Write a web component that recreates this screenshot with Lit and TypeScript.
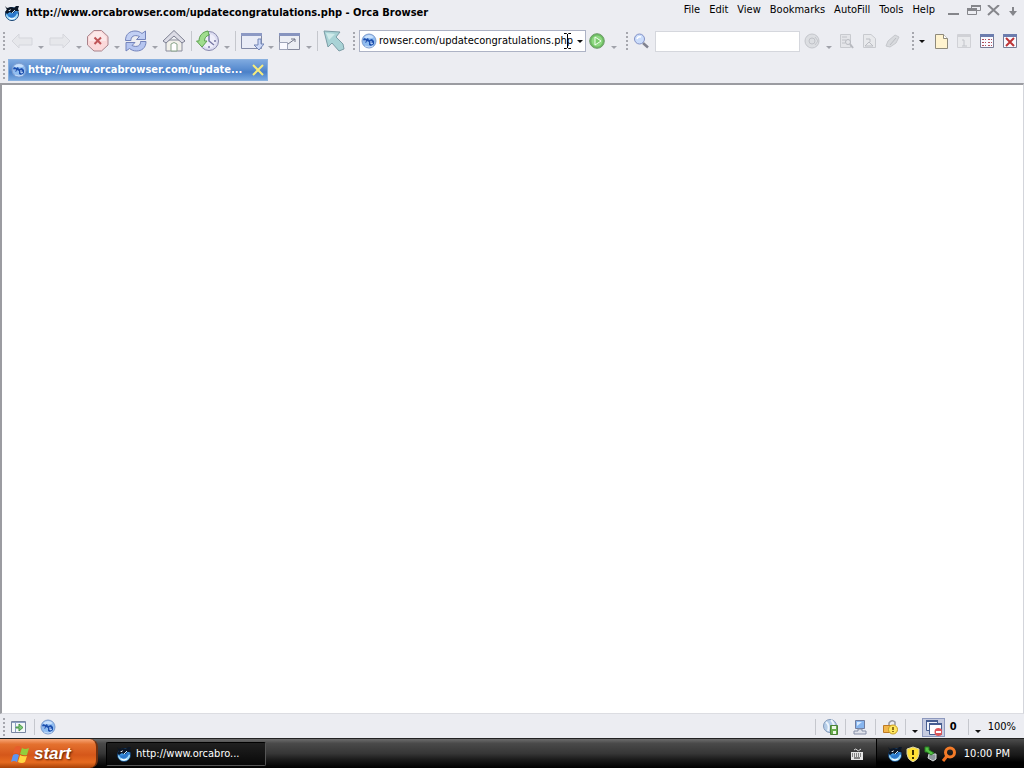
import { LitElement, html, css, svg, nothing } from "lit";
import { customElement, property } from "lit/decorators.js";
import { classMap } from "lit/directives/class-map.js";

const icon = (size: number, content: unknown, faded = false) => html`
  <svg width=${size} height=${size} viewBox="0 0 ${size} ${size}" fill="none" aria-hidden="true" opacity=${faded ? "0.55" : "1"}>${content}</svg>
`;

const orca = svg`
  <circle cx="8" cy="9" r="6.500" fill="#3f95dd" stroke="#16406e"/>
  <path d="M2 9C2 13 5 15 8 15C12 15 14 12 14 9L11 8L8 12L5 12Z" fill="#a5dcf8"/>
  <path d="M3 8C6 11 9 9 11 6L13 8C12 12 8 14 5 12Z" fill="#2b78cc"/>
  <path d="M1 1L3 3L7 2L10 3L12 1H15L14 4L15 6L11 6C10 8 8 9 6 7L3 9L1 7L3 5Z" fill="#0b1626"/>
  <path d="M4 6L7 4L6 6Z" fill="#fff"/>
  <path d="M8 8L11 5" stroke="#cfeafb"/>
  <path d="M5 13L8 14L11 13" stroke="#fff"/>`;
const globe = svg`
  <circle cx="8" cy="8" r="7" fill="#8fbcf0" stroke="#7f9ccc"/>
  <path d="M3 4Q8 0 13 4Q10 6 8 5Q5 7 3 4Z" fill="#d6e9ff" opacity=".8"/>
  <path d="M2 6L4 5L5 6L7 5L8 7L11 6L13 8L13 11L10 13L8 12V9L6 8L5 10L3 8Z" fill="#1c4fae"/>
  <path d="M10 8V11L12 10M4 7V9" stroke="#cfe4ff"/>
  <path d="M4 13Q8 15 12 13" stroke="#c5dcfa"/>`;
const back = svg`<path d="M2 12L9 5V9H22V16H9V19Z" fill="#e2e3e7" stroke="#c3c5cb"/>`;
const forward = svg`<path d="M22 12L15 5V9H2V16H15V19Z" fill="#e2e3e7" stroke="#c3c5cb"/>`;
const stop = svg`
  <path d="M8 1.500H15.500L22 7.500V16L15.500 22H8L1.500 16V7.500Z" fill="#fbd9da" stroke="#a9838b" stroke-linejoin="round"/>
  <path d="M8 3H15L20 8V12H3V8Z" fill="#fff" opacity=".4"/>
  <path d="M8.500 8.500L15 15M15 8.500L8.500 15" stroke="#bf5557" stroke-width="2"/>`;
const refresh = svg`
  <path d="M1.500 11.500C1.500 5 6 2 11 2C14 2 16 3 18 4.500L21.500 2V10.500H12.500L15.500 7.500C10 5 6.500 8 7 11.500Z" fill="#c1cff4" stroke="#7484bb"/>
  <path d="M22 12.500C22 19 17.500 22 12.500 22C9.500 22 7.500 21 5.500 19.500L2 22V13.500H11L8 16.500C13.500 19 17 16 16.500 12.500Z" fill="#b5c5f0" stroke="#7484bb"/>`;
const home = svg`
  <path d="M4 11H20V22H4Z" fill="#f1f0ea" stroke="#8a8d9c"/>
  <path d="M1 12L12 1.500L23 12L20 14L12 7L4 14Z" fill="#dcdce6" stroke="#7d8092"/>
  <path d="M9 22V15Q12 12 15 15V22Z" fill="#fff" stroke="#8aa58a"/>`;
const history = svg`
  <circle cx="13" cy="12" r="9.500" fill="#dcdcf1" stroke="#8889ad"/>
  <circle cx="13" cy="12" r="7" fill="#eeeefa"/>
  <path d="M13 5V12L18 16M13 17V19M20 12H18" stroke="#7979a5" stroke-width="1.500"/>
  <path d="M12 2C6 3 3 7 3 12H0.500L6 18L11 12H8.500C8.500 9 10 7 13 6Z" fill="#a0dd8e" stroke="#5da34f"/>`;
const openWindow = svg`
  <path d="M1.500 4.500H21.500V19.500H1.500Z" fill="#e9ecf6" stroke="#8189a6"/>
  <path d="M1 4H22V7H1Z" fill="#8c99c4"/>
  <path d="M18 10H21V15H24L19 21L14 16H18Z" fill="#cdd9f7" stroke="#7385b5"/>`;
const popup = svg`
  <path d="M1.500 4.500H21.500V20.500H1.500Z" fill="#eceef4" stroke="#868b9e"/>
  <path d="M1 4H22V7H1Z" fill="#8794bf"/>
  <path d="M1.500 13.500H9.500V20.500H1.500Z" fill="#fafaff" stroke="#9ea4b8"/>
  <path d="M10 15L17 10M13 10H17V13" stroke="#727788"/>`;
const pointer = svg`<path d="M2 2L18 3L14 8L21 15L22 20L17 22L10 14L6 18Z" fill="#a9d3d6" stroke="#7c9da6"/><path d="M4 4L13 5L7 11Z" fill="#cfeaea"/>`;
const go = svg`
  <circle cx="8" cy="8" r="7.300" fill="#6dbd62" stroke="#6d9b69"/>
  <circle cx="8" cy="8" r="5.500" fill="#8ed882"/>
  <path d="M6 4L12 8L6 12Z" fill="#7acb6d" stroke="#f4fff2"/>`;
const magnifier = svg`
  <path d="M10 10L15 14.500" stroke="#80828f" stroke-width="2.500"/>
  <circle cx="6.500" cy="6" r="5" fill="#cadcfb" stroke="#8392c6"/>
  <path d="M4 6Q5 3 8 4" stroke="#fff" stroke-width="1.500"/>`;
const paleTarget = svg`<circle cx="8" cy="8" r="7" fill="#dcdee2" stroke="#c4c6cc"/><circle cx="8" cy="8" r="3" stroke="#c0c2c8"/><path d="M11 4L14 8L11 12" stroke="#c4c6cc"/>`;
const paleFind = svg`<path d="M2.500 1.500H12.500V14.500H2.500Z" fill="#e4e5e9" stroke="#c8cacf"/><path d="M4 4H9M4 7H8M4 10H7" stroke="#c0c2c8"/><circle cx="10" cy="9" r="2.500" stroke="#b8bac0"/><path d="M12 11L15 15" stroke="#b8bac0" stroke-width="2"/>`;
const palePage = svg`<path d="M2.500 1.500H10L14.500 5.500V14.500H2.500Z" fill="#e8e9ec" stroke="#c8cacf"/><path d="M5 6H9V9M4 13L8 9L12 13Z" stroke="#bcbec4"/>`;
const palePen = svg`<path d="M2 13L4 8L11 2L15 4L12 10L6 14Z" fill="#d8dade" stroke="#c6c8cd"/><path d="M6 12L12 5" stroke="#bbbdc3"/>`;
const newPage = svg`<path d="M2.500 1.500H10.500L14.500 5.500V15.500H2.500Z" fill="#fff3cf" stroke="#8f8a7b"/><path d="M10.500 1.500V5.500H14.500" fill="#fff" stroke="#8f8a7b"/>`;
const paleTab = svg`<path d="M1.500 1.500H14.500V14.500H1.500Z" fill="#e9eaed" stroke="#d0d1d6"/><path d="M2 3H14" stroke="#d0d1d6" stroke-width="2"/><path d="M6 7H8V13M6 13H11" stroke="#c2c4ca"/>`;
const grid = svg`<path d="M1.500 1.500H14.500V14.500H1.500Z" fill="#fafaff" stroke="#777d96"/><path d="M1 2.500H15" stroke="#6c7dae" stroke-width="3"/><path d="M3 6.500H7M9 6.500H13M3 9.500H7M9 9.500H13M3 12.500H7M9 12.500H13" stroke="#b0505c" stroke-dasharray="2 1"/>`;
const closeTab = svg`<path d="M1.500 1.500H14.500V14.500H1.500Z" fill="#fafaff" stroke="#777d96"/><path d="M1 2.500H15" stroke="#6c7dae" stroke-width="3"/><path d="M4 5L12 13M12 5L4 13" stroke="#bd3436" stroke-width="2"/>`;
const panel = svg`<path d="M.5 2.500H14.500V13.500H.5Z" fill="#f4f7f8" stroke="#7986a0"/><path d="M1 3.500H14M4.500 3V13" stroke="#8da0c4"/><path d="M5 8H8V5L12 8.500L8 12V9H5Z" fill="#7fca79" stroke="#4b9648"/>`;
const globeDisk = svg`<circle cx="8" cy="7" r="6.500" fill="#b5cde8" stroke="#8299b8"/><path d="M4 3Q8 6 6 12M9 1Q13 5 11 8" stroke="#eef5fc" stroke-width="2"/><path d="M8.500 6.500H15.500V15.500H8.500Z" fill="#67ad4c" stroke="#4c8238"/><path d="M10 7H14V10H10ZM11 12H14V15H11Z" fill="#eef7e9"/>`;
const computer = svg`<path d="M3.500 1.500H12.500V9.500H3.500Z" fill="#87b5ee" stroke="#6f7da0"/><path d="M5 3H10L5 7Z" fill="#d6e9ff"/><path d="M6 10H10V12H14V15H2V12H6Z" fill="#dfe2ea" stroke="#838da6"/>`;
const lock = svg`<path d="M1.500 6.500H10.500V13.500H1.500Z" fill="#f2b64c" stroke="#bd7b24"/><path d="M7 6V4Q10 0 13 3V6" stroke="#96979e" stroke-width="1.500"/><circle cx="11" cy="10.500" r="4.500" fill="#ffe75e" stroke="#c69b22"/><path d="M11 8V11M11 12V13" stroke="#6b4a00" stroke-width="1.500"/>`;
const blocked = svg`<path d="M1.500 1.500H12.500V11.500H1.500Z" fill="#eef2fb" stroke="#475e91"/><path d="M1 2H13" stroke="#475e91" stroke-width="2"/><path d="M4.500 4.500H16.500V15.500H4.500Z" fill="#fff" stroke="#475e91"/><path d="M4 5H17" stroke="#475e91" stroke-width="2"/><circle cx="13.500" cy="13" r="4" fill="#db5559"/><path d="M11 13H16" stroke="#fff" stroke-width="2"/>`;
const windowsFlag = svg`<path d="M4 2Q7 0 10 2L8 9Q5 7 2 9Z" fill="#e65d2b"/><path d="M11 3Q14 5 18 3L16 10Q13 11 9 9Z" fill="#93ce3c"/><path d="M2 10Q5 8 8 10L6 17Q3 15 0 17Z" fill="#5e95f0"/><path d="M9 10Q12 12 16 11L14 17Q11 19 7 17Z" fill="#ffd640"/>`;
const keyboard = svg`<path d="M1 5H13V13H1Z" fill="#e6e6e6"/><path d="M2 7H12M2 9H12" stroke="#222" stroke-dasharray="1 1"/><path d="M4 11H10" stroke="#222"/><path d="M4 3Q6 1 7 3T11 2" stroke="#ddd"/>`;
const shield = svg`<path d="M8 1L14 3V8Q14 13 8 16Q2 13 2 8V3Z" fill="#ffe034" stroke="#d8d3a8"/><path d="M8 4V9M8 11V13" stroke="#3c3000" stroke-width="2"/>`;
const eject = svg`<path d="M6 8L13 8V13L10 15L5 12Z" fill="#8f979c" stroke="#d7dcde"/><path d="M2 1L6 1V4L11 7L8 9L4 6L2 6Z" fill="#54c244" stroke="#267e20"/>`;
const orangeFind = svg`<path d="M6 10L2 15" stroke="#f27222" stroke-width="3"/><circle cx="9" cy="6.500" r="4.500" stroke="#f47b28" stroke-width="3"/>`;

@customElement("tool-button")
class ToolButton extends LitElement {
  @property() label = "";
  @property({ type: Boolean }) split = false;
  @property({ type: Boolean }) small = false;
  @property({ type: Boolean }) pressed = false;
  @property({ type: Boolean }) disabled = false;
  @property({ attribute: false }) glyph: unknown = nothing;

  static styles = css`
    :host { display: flex; align-items: center; flex: none; }
    button { box-sizing: border-box; display: grid; place-items: center; padding: 0; border: 0; background: none; width: 24px; height: 24px; }
    svg { display: block; }
    .small { width: 16px; height: 20px; }
    .pressed { width: 23px; height: 19px; background: #c5cbe0; border: 1px solid #8d98bd; }
    .arrow { width: 14px; align-items: end; padding-bottom: 4px; }
    .small + .arrow { padding-left: 4px; height: 24px; }
    .arrow::after { content: ""; border: 3px solid transparent; border-top-color: #a0a2aa; border-bottom: 0; }
  `;

  render() {
    const size = this.pressed ? 17 : this.small ? 16 : 24;
    return html`
      <button class=${classMap({ small: this.small, pressed: this.pressed })} aria-label=${this.label} ?disabled=${this.disabled}>
        ${icon(size, this.glyph, this.disabled)}
      </button>
      ${this.split ? html`<button class="arrow" aria-label="${this.label} options"></button>` : nothing}
    `;
  }
}

@customElement("app-root")
class AppRoot extends LitElement {
  static styles = css`
    :host {
      display: flex; flex-direction: column; height: 100vh; overflow: hidden;
      background: #ecedf2; color: #000;
      font: 11px/14px "DejaVu Sans Condensed", "DejaVu Sans", sans-serif;
    }
    * { box-sizing: border-box; }
    svg { display: block; flex: none; }
    button { padding: 0; border: 0; background: none; font: inherit; color: inherit; }
    input { min-width: 0; padding: 0; border: 0; outline: 0; background: none; font: inherit; color: inherit; }
    .title { display: flex; align-items: center; flex: none; height: 25px; padding: 0 6px 0 4px; }
    h1 { margin: 0 0 0 6px; font-size: 11px; line-height: 14px; font-weight: bold; flex: 1; white-space: nowrap; }
    .menu { display: flex; gap: 9px; height: 25px; padding-top: 3px; align-items: start; }
    .controls { display: flex; gap: 4px; margin-left: 11px; }
    .tools { display: flex; align-items: center; flex: none; height: 32px; padding: 0 6px 0 3px; }
    .grip { flex: none; width: 2px; height: 18px; background: repeating-linear-gradient(#a6a7ae 0 2px, transparent 2px 4px); }
    .spaced { margin-left: 7px; }
    .group { display: flex; align-items: center; }
    .main { padding-left: 5px; }
    .rule { flex: none; width: 6px; height: 20px; border-left: 1px solid #c5c7cd; margin-left: 1px; margin-right: -1px; }
    .home { margin-right: 4px; }
    .address { display: flex; align-items: center; flex: 1; height: 22px; margin: 0 3px 0 4px; padding-left: 1px; background: #fff; border: 1px solid #adb3c5; position: relative; }
    .address input { flex: 1; margin-left: 2px; }
    .drop { flex: none; width: 11px; height: 18px; display: grid; place-items: center; }
    .drop::after { content: ""; border: 3px solid transparent; border-top-color: #111; border-bottom: 0; }
    .caret { position: absolute; right: 14px; top: 2px; }
    .search { margin-left: 5px; }
    .find { width: 145px; height: 21px; background: #fff; border: 1px solid #d5d7dd; margin: 0 4px 0 6px; padding: 0 3px; }
    .pale { gap: 7px; margin: 0 12px 0 4px; }
    .pages { gap: 7px; margin-left: 3px; }
    .pages .drop { width: 9px; }
    .tabs { display: flex; align-items: center; flex: none; height: 26px; padding: 0 3px; gap: 3px; }
    .tab { display: flex; align-items: center; width: 260px; height: 22px; padding: 0 3px 0 2px; color: #fff; font-weight: bold; background: linear-gradient(#7ea9df, #5a8dd0 45%, #4a80c8 60%, #78a8e0); border: 1px solid #8ab1df; }
    .tab span { flex: 1; margin-left: 1px; overflow: hidden; white-space: nowrap; }
    main { flex: 1; min-height: 0; background: #fff; border: solid #9b9ca1; border-width: 2px 1px 1px 2px; border-right-color: #d3d5db; border-bottom-color: #dcdde2; }
    .status { display: flex; align-items: center; flex: none; height: 24px; padding: 2px 8px 0 3px; }
    .status .rule { height: 16px; }
    .left { flex: 1; padding-left: 6px; }
    .left .rule { margin: 0 0 0 7px; }
    .right { gap: 7px; }
    .right .rule { width: 1px; margin: 0 -1px 0 0; }
    .right .drop { width: 6px; align-items: end; padding-bottom: 3px; }
    .count { display: flex; align-items: center; gap: 4px; }
    .count b { width: 12px; padding-left: 1px; }
    .taskbar { display: flex; align-items: center; flex: none; height: 30px; color: #fff; border-top: 1px solid #222; background: linear-gradient(#6d6d6d, #4a4a4a 15%, #363636 50%, #1c1c1c 70%, #000); }
    .start { display: flex; align-items: center; gap: 5px; width: 98px; height: 29px; padding-left: 11px; border-radius: 0 8px 8px 0; background: linear-gradient(#f8a777, #e4712f 18%, #d5571a 55%, #e66b20 80%, #a74108); border-right: 2px solid #70300f; font: italic bold 17px/20px "Liberation Sans", sans-serif; text-shadow: 1px 1px 2px #5b2000; }
    .task { display: flex; align-items: center; gap: 4px; width: 160px; height: 24px; margin-left: 8px; padding-left: 9px; background: linear-gradient(#202020, #080808); border: 1px solid #000; border-right-color: #555; border-bottom-color: #555; border-radius: 2px; white-space: nowrap; }
    .space { flex: 1; }
    .keys { margin-right: 12px; }
    .tray { display: flex; align-items: center; gap: 2px; height: 29px; padding: 0 14px 0 10px; border-left: 1px solid #000; background: linear-gradient(#4d4d4d, #292929 30%, #191919 55%, #000 80%); }
    .tray time { margin-left: 5px; white-space: nowrap; }
  `;

  render() {
    const tool = (label: string, glyph: unknown, split = false, disabled = false) => html`
      <tool-button .label=${label} .glyph=${glyph} .split=${split} .disabled=${disabled}></tool-button>`;
    const small = (label: string, glyph: unknown, split = false) => html`
      <tool-button .label=${label} .glyph=${glyph} .split=${split} small></tool-button>`;
    const rule = html`<span class="rule"></span>`;
    const grip = html`<span class="grip"></span>`;
    return html`
      <header class="title">
        ${icon(16, orca)}
        <h1>http://www.orcabrowser.com/updatecongratulations.php - Orca Browser</h1>
        <nav class="menu">
          ${["File", "Edit", "View", "Bookmarks", "AutoFill", "Tools", "Help"].map((m) => html`<button>${m}</button>`)}
        </nav>
        <div class="controls">
          <button aria-label="Minimize">${icon(16, svg`<path d="M2 9H13" stroke="#85868b" stroke-width="2"/>`)}</button>
          <button aria-label="Restore">${icon(16, svg`<path d="M5.500 4V-.5H14.500V5.500H11M1.500 3.500H10.500V9.500H1.500Z" stroke="#85868b"/><path d="M5 .5H15M1 4.500H11" stroke="#85868b" stroke-width="3"/>`)}</button>
          <button aria-label="Close">${icon(16, svg`<path d="M2 0L13 10M13 0L2 10" stroke="#85868b" stroke-width="2"/>`)}</button>
          <button aria-label="Collapse">${icon(12, svg`<path d="M7 0V6" stroke="#85868b" stroke-width="2"/><path d="M3 4H11L7 9Z" fill="#85868b"/>`)}</button>
        </div>
      </header>

      <div class="tools">
        ${grip}
        <div class="group main">
          ${tool("Back", back, true, true)}${tool("Forward", forward, true, true)}
          ${tool("Stop", stop, true)}${tool("Refresh", refresh, true)}
          <span class="home">${tool("Home", home)}</span>${rule}
          ${tool("History", history, true)}${rule}
          ${tool("Windows", openWindow, true)}${tool("Popups", popup, true)}${rule}
          ${tool("Select", pointer)}
        </div>
        <span class="grip spaced"></span>
        <div class="address">
          ${icon(16, globe)}
          <input aria-label="Address" value="rowser.com/updatecongratulations.php" />
          <button class="drop" aria-label="Recent addresses"></button>
          <svg class="caret" width="7" height="16" viewBox="0 0 7 16" fill="none"><path d="M0 .5H2.500L3.500 1.500L4.500 .5H7M3.500 1V15M0 15.500H2.500L3.500 14.500L4.500 15.500H7" stroke="#000"/></svg>
        </div>
        ${small("Go", go, true)}
        <span class="grip spaced"></span>
        <span class="search">${small("Search", magnifier)}</span>
        <input class="find" aria-label="Search text" />
        ${small("Highlight", paleTarget, true)}
        <div class="group pale">
          ${small("Find", paleFind)}${small("Page", palePage)}${small("Mark", palePen)}
        </div>
        ${grip}
        <div class="group pages">
          <button class="drop" aria-label="Page list"></button>
          ${small("New page", newPage)}${small("Duplicate page", paleTab)}${small("All pages", grid)}${small("Close page", closeTab)}
        </div>
      </div>

      <div class="tabs">
        ${grip}
        <div class="tab">${icon(16, globe)}<span>http://www.orcabrowser.com/update...</span>
          <button aria-label="Close tab">${icon(12, svg`<path d="M1 1L11 11M11 1L1 11" stroke="#f6ec7c" stroke-width="2"/>`)}</button>
        </div>
      </div>

      <main></main>

      <footer class="status">
        ${grip}
        <div class="group left">${small("Side panel", panel)}${rule}${small("Browser", globe)}</div>
        <div class="group right">
          ${rule}${small("Offline", globeDisk)}${rule}${small("Proxy", computer)}${rule}${small("Security", lock)}${rule}
          <span class="count"><button class="drop" aria-label="Blocker options"></button>
            <tool-button .label=${"Popup blocker"} .glyph=${blocked} pressed></tool-button><b>0</b></span>
          ${rule}<button class="drop" aria-label="Zoom options"></button><span>100%</span>
        </div>
      </footer>

      <div class="taskbar">
        <button class="start">${icon(18, windowsFlag)}start</button>
        <button class="task">${icon(16, orca)}http://www.orcabro...</button>
        <span class="space"></span>
        <span class="keys">${icon(14, keyboard)}</span>
        <div class="tray">${icon(16, orca)}${icon(16, shield)}${icon(16, eject)}${icon(16, orangeFind)}<time>10:00 PM</time></div>
      </div>
    `;
  }
}
